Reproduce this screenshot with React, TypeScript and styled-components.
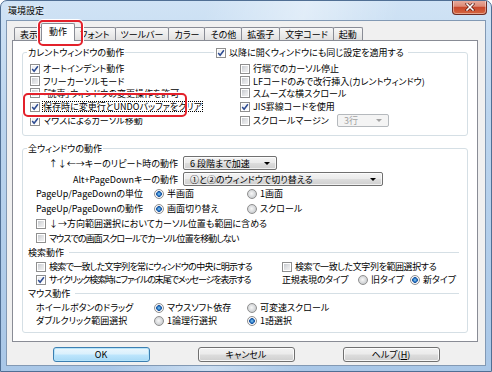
import React from "react";
import styled, { createGlobalStyle, css } from "styled-components";

const FONT = `"Noto Sans CJK JP", "Noto Sans", sans-serif`;

const GlobalStyle = createGlobalStyle`
  html, body { margin: 0; padding: 0; background: #ffffff; }
  body { font-family: ${FONT}; }
  *, *::before, *::after { box-sizing: border-box; }
`;

const Window = styled.div`
  position: relative;
  width: 492px;
  height: 372px;
  border: 1px solid #506f94;
  border-radius: 7px 7px 0 0;
  padding: 0 5px 5px 5px;
  display: flex;
  flex-direction: column;
  background:
    linear-gradient(105deg, rgba(255,255,255,0) 35%, rgba(255,255,255,0.4) 52%, rgba(255,255,255,0) 68%),
    linear-gradient(180deg, #d0e3f5 0%, #bcd5ee 30%, #a9c7e7 100%);
  font-family: ${FONT};
  font-size: 9px;
  line-height: 1;
  font-feature-settings: "palt";
  color: #000;
  overflow: hidden;
`;

const TitleBar = styled.div`
  height: 19px;
  display: flex;
  align-items: flex-start;
  justify-content: space-between;
`;

const Title = styled.div`
  height: 19px;
  display: flex;
  align-items: center;
  padding-left: 2px;
  text-shadow: 0 0 5px rgba(255,255,255,0.9);
`;

const CloseButton = styled.div`
  width: 35px;
  height: 15px;
  margin: -1px -1px 0 0;
  border: 1px solid #6d2b23;
  border-top: none;
  border-radius: 0 0 4px 4px;
  background: linear-gradient(180deg, #eab0a2 0%, #dd8a76 45%, #c9482c 52%, #d4653f 100%);
  box-shadow: inset 0 0 0 1px rgba(255,255,255,0.4);
  display: flex;
  align-items: center;
  justify-content: center;
`;

const Client = styled.div`
  flex: 1;
  background: #f0f0f0;
  border: 1px solid #8299b4;
  display: flex;
  flex-direction: column;
`;

const TabStrip = styled.div`
  height: 19px;
  display: flex;
  align-items: flex-end;
  padding-left: 7px;
  position: relative;
  z-index: 1;
`;

const Tab = styled.div<{ $active?: boolean }>`
  height: 13px;
  padding: 0 5px;
  margin-right: -1px;
  border: 1px solid #898c95;
  border-bottom: none;
  border-radius: 2px 2px 0 0;
  background: linear-gradient(180deg, #f7f7f7 0%, #ececec 50%, #e0e0e0 100%);
  display: flex;
  align-items: center;
  white-space: nowrap;
  ${(p) =>
    p.$active &&
    css`
      height: 18px;
      margin: 0 -1px -1px -2px;
      padding: 0 7px 2px;
      background: #ffffff;
      position: relative;
      z-index: 2;
    `}
`;

const Panel = styled.div`
  margin: 0 7px 0 5px;
  border: 1px solid #898c95;
  background: #ffffff;
  padding: 11px 9px 8px 9px;
  display: flex;
  flex-direction: column;
  gap: 12px;
`;

const Group = styled.div`
  border: 1px solid #d5dfe5;
  border-radius: 3px;
`;

const GroupHeader = styled.div`
  margin-top: -7px;
  height: 13px;
  display: flex;
  align-items: center;
  padding-left: 4px;
`;

const HeaderSlot = styled.div<{ $width?: number }>`
  ${(p) => (p.$width ? `width: ${p.$width}px;` : "")}
  display: flex;
  align-items: center;
`;

const Legend = styled.span`
  background: #ffffff;
  padding: 0 1px;
  white-space: nowrap;
`;

const HeaderCheck = styled.div`
  background: #ffffff;
  padding: 0 3px 0 2px;
  display: flex;
  align-items: center;
`;

const Body = styled.div<{ $pt: number; $pb: number; $pl: number }>`
  padding: ${(p) => `${p.$pt}px 0 ${p.$pb}px ${p.$pl}px`};
  display: flex;
  flex-direction: column;
`;

const Row = styled.div<{ $h: number; $mt?: number }>`
  height: ${(p) => p.$h}px;
  margin-top: ${(p) => p.$mt ?? 0}px;
  display: flex;
  align-items: center;
`;

const Cell = styled.div<{ $w?: number; $ls?: number }>`
  ${(p) => (p.$w ? `width: ${p.$w}px;` : "")}
  ${(p) => (p.$ls ? `letter-spacing: ${p.$ls}px;` : "")}
  flex: none;
  display: flex;
  align-items: center;
  white-space: nowrap;
`;

const RightLabel = styled.div`
  width: 142px;
  margin-right: 5px;
  text-align: right;
  white-space: nowrap;
`;

const Item = styled.label`
  display: flex;
  align-items: center;
  gap: 2px;
  white-space: nowrap;
`;

const ItemText = styled.span<{ $focus?: boolean; $ls?: number }>`
  padding: 1px 1px;
  ${(p) => (p.$ls ? `letter-spacing: ${p.$ls}px;` : "")}
  ${(p) => p.$focus && css`outline: 1px dotted #000; outline-offset: -1px;`}
`;

const Box = styled.span<{ $checked?: boolean }>`
  flex: none;
  width: 10px;
  height: 10px;
  border: 1px solid #8f8f8f;
  box-shadow: inset 0 0 0 1px #ffffff;
  display: flex;
  align-items: center;
  justify-content: center;
  background: ${(p) =>
    p.$checked
      ? "linear-gradient(135deg, #e9eaec 0%, #ffffff 100%)"
      : "linear-gradient(135deg, #bfc3c8 0%, #e3e4e6 55%, #f4f4f4 100%)"};
`;

const Dot = styled.span<{ $checked?: boolean }>`
  flex: none;
  width: 10px;
  height: 10px;
  border-radius: 50%;
  border: 1px solid #8f8f8f;
  background: ${(p) =>
    p.$checked
      ? "radial-gradient(circle at 50% 50%, #8fd0f6 0, #2f7cc4 1.6px, #1d54a0 2.6px, #ffffff 3.1px, #e8e8e8 5px)"
      : "radial-gradient(circle at 45% 45%, #f7f7f7 0, #dadcde 3px, #c5c8cb 5px)"};
`;

const Separator = styled.div`
  height: 15px;
  display: flex;
  align-items: center;
  gap: 5px;
  margin-left: -8px;
  padding-right: 8px;
  white-space: nowrap;
`;

const SepLine = styled.div`
  flex: 1;
  height: 1px;
  background: #d5dfe5;
`;

const Combo = styled.div<{ $w: number; $disabled?: boolean }>`
  width: ${(p) => p.$w}px;
  height: 14px;
  border: 1px solid #707070;
  border-radius: 2px;
  background: linear-gradient(180deg, #f4f4f4 0%, #ebebeb 48%, #dddddd 52%, #cfcfcf 100%);
  box-shadow: inset 0 0 0 1px rgba(255,255,255,0.7);
  display: flex;
  align-items: center;
  justify-content: space-between;
  padding: 0 6px 0 6px;
  white-space: nowrap;
  ${(p) =>
    p.$disabled &&
    css`
      height: 13px;
      border-color: #b5b9bd;
      background: #f4f4f4;
      color: #a3a3a3;
      box-shadow: none;
    `}
`;

const Arrow = styled.span<{ $disabled?: boolean }>`
  width: 0;
  height: 0;
  border-left: 3px solid transparent;
  border-right: 3px solid transparent;
  border-top: 3px solid ${(p) => (p.$disabled ? "#a3a3a3" : "#000")};
`;

const ButtonRow = styled.div`
  display: flex;
  justify-content: center;
  gap: 48px;
  padding-top: 5px;
`;

const Button = styled.div<{ $default?: boolean }>`
  width: 97px;
  height: 15px;
  border: 1px solid #707070;
  border-radius: 3px;
  background: linear-gradient(180deg, #f2f2f2 0%, #ebebeb 48%, #dddddd 52%, #cfcfcf 100%);
  box-shadow: inset 0 0 0 1px rgba(255,255,255,0.8);
  display: flex;
  align-items: center;
  justify-content: center;
  ${(p) =>
    p.$default &&
    css`
      border-color: #3c7fb1;
      background: linear-gradient(180deg, #eaf6fd 0%, #d9f0fc 48%, #bee6fd 52%, #a7d9f5 100%);
      box-shadow: inset 0 0 0 1px #b6e4fa;
    `}
`;

const Highlight = styled.div<{ $x: number; $y: number; $w: number; $h: number }>`
  position: absolute;
  left: ${(p) => p.$x}px;
  top: ${(p) => p.$y}px;
  width: ${(p) => p.$w}px;
  height: ${(p) => p.$h}px;
  border: 2px solid #e3212b;
  border-radius: 5px;
  box-shadow: 0 0 0 1px #ffffff;
  pointer-events: none;
  z-index: 5;
`;

const CheckGlyph = () => (
  <svg width="8" height="8" viewBox="0 0 8 8">
    <path d="M1.2 4.1 L3.1 6.3 L6.9 1.2" fill="none" stroke="#2e4c92" strokeWidth="1.5" />
  </svg>
);

const CloseGlyph = () => (
  <svg width="10" height="8" viewBox="0 0 10 8">
    <path d="M2 1 L8 7 M8 1 L2 7" stroke="#5a1a12" strokeWidth="3" strokeLinecap="square" />
    <path d="M2 1 L8 7 M8 1 L2 7" stroke="#ffffff" strokeWidth="1.6" strokeLinecap="square" />
  </svg>
);

const Check: React.FC<{ checked?: boolean; focus?: boolean; ls?: number; children: React.ReactNode }> = ({
  checked,
  focus,
  ls,
  children,
}) => (
  <Item>
    <Box $checked={checked}>{checked && <CheckGlyph />}</Box>
    <ItemText $focus={focus} $ls={ls}>
      {children}
    </ItemText>
  </Item>
);

const Radio: React.FC<{ checked?: boolean; children: React.ReactNode }> = ({ checked, children }) => (
  <Item>
    <Dot $checked={checked} />
    <ItemText>{children}</ItemText>
  </Item>
);

const tabs = ["表示", "動作", "フォント", "ツールバー", "カラー", "その他", "拡張子", "文字コード", "起動"];

const currentLeft: [string, boolean, boolean][] = [
  ["オートインデント動作", true, false],
  ["フリーカーソルモード", false, false],
  ["「読専」ウィンドウの変更操作を許可", false, false],
  ["保存時に変更行とUNDOバッファをクリア", true, true],
  ["マウスによるカーソル移動", true, false],
];
const currentRight: [string, boolean][] = [
  ["行端でのカーソル停止", false],
  ["LFコードのみで改行挿入(カレントウィンドウ)", false],
  ["スムーズな横スクロール", false],
  ["JIS罫線コードを使用", true],
  ["スクロールマージン", false],
];
const currentHeights = [13, 12, 12, 15, 13];

const RadioRow: React.FC<{ h: number; label: string; a: string; b: string; sel: 0 | 1 }> = ({ h, label, a, b, sel }) => (
  <Row $h={h}>
    <Cell $w={118}>{label}</Cell>
    <Cell $w={93}>
      <Radio checked={sel === 0}>{a}</Radio>
    </Cell>
    <Cell>
      <Radio checked={sel === 1}>{b}</Radio>
    </Cell>
  </Row>
);

export default function App() {
  return (
    <>
      <GlobalStyle />
      <Window>
        <TitleBar>
          <Title>環境設定</Title>
          <CloseButton>
            <CloseGlyph />
          </CloseButton>
        </TitleBar>
        <Client>
          <TabStrip>
            {tabs.map((t, i) => (
              <Tab key={t} $active={i === 1}>
                {t}
              </Tab>
            ))}
          </TabStrip>
          <Panel>
            <Group>
              <GroupHeader>
                <HeaderSlot $width={187}>
                  <Legend>カレントウィンドウの動作</Legend>
                </HeaderSlot>
                <HeaderCheck>
                  <Check checked>以降に開くウィンドウにも同じ設定を適用する</Check>
                </HeaderCheck>
              </GroupHeader>
              <Body $pt={3} $pb={8} $pl={7}>
                {currentLeft.map(([l, c, f], i) => (
                  <Row key={l} $h={currentHeights[i]}>
                    <Cell $w={210}>
                      <Check checked={c} focus={f}>
                        {l}
                      </Check>
                    </Cell>
                    <Cell $w={i === 4 ? 97 : undefined}>
                      <Check checked={currentRight[i][1]}>{currentRight[i][0]}</Check>
                    </Cell>
                    {i === 4 && (
                      <Combo $w={52} $disabled>
                        <span>3行</span>
                        <Arrow $disabled />
                      </Combo>
                    )}
                  </Row>
                ))}
              </Body>
            </Group>

            <Group>
              <GroupHeader>
                <Legend>全ウィンドウの動作</Legend>
              </GroupHeader>
              <Body $pt={1} $pb={5} $pl={13}>
                <Row $h={14}>
                  <RightLabel>↑↓←→キーのリピート時の動作</RightLabel>
                  <Combo $w={94}>
                    <span>6 段階まで加速</span>
                    <Arrow />
                  </Combo>
                </Row>
                <Row $h={14} $mt={2}>
                  <RightLabel>Alt+PageDownキーの動作</RightLabel>
                  <Combo $w={200}>
                    <span>①と②のウィンドウで切り替える</span>
                    <Arrow />
                  </Combo>
                </Row>
                <RadioRow h={15} label="PageUp/PageDownの単位" a="半画面" b="1画面" sel={0} />
                <RadioRow h={15} label="PageUp/PageDownの動作" a="画面切り替え" b="スクロール" sel={0} />
                <Row $h={15}>
                  <Check>↓→方向範囲選択においてカーソル位置も範囲に含める</Check>
                </Row>
                <Row $h={14}>
                  <Check ls={-0.9}>マウスでの画面スクロールでカーソル位置を移動しない</Check>
                </Row>
                <Separator>
                  <span>検索動作</span>
                  <SepLine />
                </Separator>
                <Row $h={13}>
                  <Cell $w={246}>
                    <Check ls={-0.7}>検索で一致した文字列を常にウィンドウの中央に明示する</Check>
                  </Cell>
                  <Cell>
                    <Check ls={-0.4}>検索で一致した文字列を範囲選択する</Check>
                  </Cell>
                </Row>
                <Row $h={13}>
                  <Cell $w={246}>
                    <Check checked ls={-1.1}>
                      サイクリック検索時にファイルの末尾でメッセージを表示する
                    </Check>
                  </Cell>
                  <Cell $w={76} $ls={-0.3}>
                    正規表現のタイプ
                  </Cell>
                  <Cell $w={52}>
                    <Radio>旧タイプ</Radio>
                  </Cell>
                  <Cell>
                    <Radio checked>新タイプ</Radio>
                  </Cell>
                </Row>
                <Separator>
                  <span>マウス動作</span>
                  <SepLine />
                </Separator>
                <RadioRow h={13} label="ホイールボタンのドラッグ" a="マウスソフト依存" b="可変速スクロール" sel={0} />
                <RadioRow h={13} label="ダブルクリック範囲選択" a="1論理行選択" b="1語選択" sel={1} />
              </Body>
            </Group>
          </Panel>
          <ButtonRow>
            <Button $default>OK</Button>
            <Button>キャンセル</Button>
            <Button>
              ヘルプ(<u>H</u>)
            </Button>
          </ButtonRow>
        </Client>
        <Highlight $x={37} $y={19} $w={45} $h={26} />
        <Highlight $x={22} $y={92} $w={164} $h={24} />
      </Window>
    </>
  );
}
